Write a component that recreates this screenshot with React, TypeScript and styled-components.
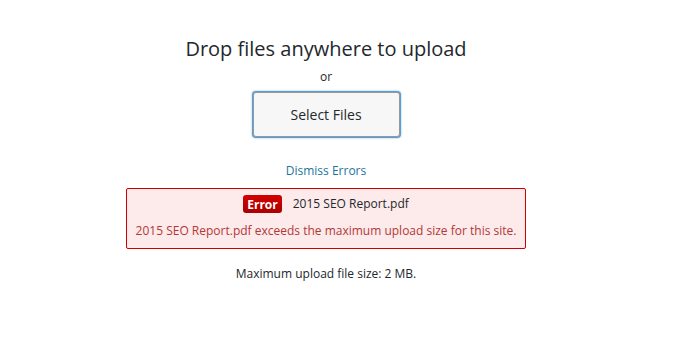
import styled, { createGlobalStyle } from "styled-components";

const GlobalStyle = createGlobalStyle`
  html, body {
    margin: 0;
    padding: 0;
    background: #ffffff;
  }
  body {
    font-family: "Open Sans", "Noto Sans", sans-serif;
    color: #23282d;
  }
`;

function App() {
  return (
    <>
      <GlobalStyle />
      <Page>
        <Heading>Drop files anywhere to upload</Heading>
        <OrText>or</OrText>
        <SelectButton type="button">Select Files</SelectButton>
        <DismissLink href="#">Dismiss Errors</DismissLink>
        <ErrorBox>
          <ErrorTitleRow>
            <ErrorBadge>Error</ErrorBadge>
            <FileName>2015 SEO Report.pdf</FileName>
          </ErrorTitleRow>
          <ErrorMessage>
            2015 SEO Report.pdf exceeds the maximum upload size for this site.
          </ErrorMessage>
        </ErrorBox>
        <MaxSize>Maximum upload file size: 2 MB.</MaxSize>
      </Page>
    </>
  );
}

export default App;

const Page = styled.div`
  width: 686px;
  height: 363px;
  box-sizing: border-box;
  padding: 35px 34px 0 0;
  display: flex;
  flex-direction: column;
  align-items: center;
`;

const Heading = styled.h1`
  margin: 0;
  font-size: 20px;
  line-height: 28px;
  font-weight: 400;
  color: #23282d;
`;

const OrText = styled.p`
  margin: 5px 0 0;
  font-size: 12px;
  line-height: 18px;
  color: #23282d;
`;

const SelectButton = styled.button`
  margin-top: 6px;
  width: 147px;
  height: 45px;
  box-sizing: border-box;
  border: 1px solid #999;
  border-radius: 3px;
  background: #f7f7f7;
  box-shadow: 0 0 0 1px #5b9dd9, 0 0 2px 1px rgba(30, 140, 190, 0.6);
  font-family: "Open Sans", "Noto Sans", sans-serif;
  font-size: 14px;
  color: #23282d;
  cursor: pointer;
`;

const DismissLink = styled.a`
  margin-top: 25px;
  font-size: 12px;
  line-height: 18px;
  color: #21759b;
  text-decoration: none;
`;

const ErrorBox = styled.div`
  margin-top: 8px;
  width: 400px;
  box-sizing: border-box;
  padding: 6px 4px 8px;
  border: 1px solid #cc0000;
  border-radius: 2px;
  background: #fdeaea;
  display: flex;
  flex-direction: column;
  align-items: center;
  gap: 9px;
`;

const ErrorTitleRow = styled.div`
  display: flex;
  align-items: center;
  gap: 11px;
  height: 18px;
`;

const ErrorBadge = styled.span`
  display: inline-flex;
  align-items: center;
  height: 18px;
  padding: 0 4px;
  border-radius: 3px;
  background: linear-gradient(#d40000, #a80000);
  color: #ffffff;
  font-size: 12px;
  font-weight: 700;
`;

const FileName = styled.span`
  font-size: 12px;
  line-height: 18px;
  color: #23282d;
`;

const ErrorMessage = styled.p`
  margin: 0;
  font-size: 12px;
  line-height: 18px;
  color: #b23838;
  white-space: nowrap;
`;

const MaxSize = styled.p`
  margin: 16px 0 0;
  font-size: 12px;
  line-height: 18px;
  color: #23282d;
`;
